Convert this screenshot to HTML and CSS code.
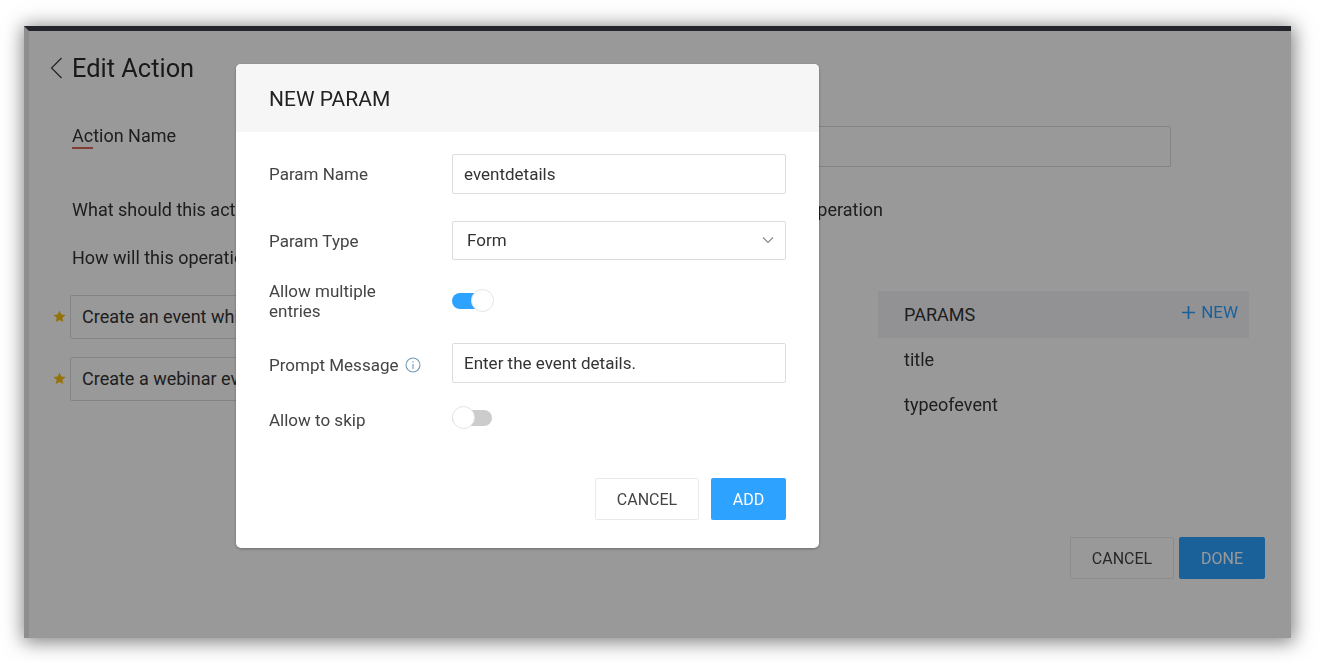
FILE: index.html
```html
<!DOCTYPE html>
<html lang="en">
<head>
<meta charset="utf-8">
<title>Edit Action</title>
<link rel="stylesheet" href="styles.css">
</head>
<body>
<div class="stage">
  <div class="window">
    <header class="page-head">
      <svg class="back" width="13" height="22" viewBox="0 0 13 22"><path d="M11.500 1 1.500 11l10 10" fill="none" stroke="#333" stroke-width="1.100"/></svg>
      <h1 class="page-title">Edit Action</h1>
    </header>
    <div class="name-row">
      <label class="name-label"><span class="spell">Ac</span>tion Name</label>
      <div class="field name-field"></div>
    </div>
    <div class="line line-what"><span>What should this action do</span><span>Describe the operation</span></div>
    <div class="line line-how">How will this operation be triggered</div>
    <div class="lower">
      <div class="phrases">
        <div class="phrase">
          <svg class="star" width="13" height="13" viewBox="0 0 24 24"><path d="M12 1l3.300 7.300 7.900.9-5.900 5.300 1.700 7.800L12 18.300 5 22.300l1.700-7.800L.8 9.200l7.900-.9z" fill="#f5be12"/></svg>
          <div class="field phrase-field">Create an event which is open to all</div>
        </div>
        <div class="phrase">
          <svg class="star" width="13" height="13" viewBox="0 0 24 24"><path d="M12 1l3.300 7.300 7.900.9-5.900 5.300 1.700 7.800L12 18.300 5 22.300l1.700-7.800L.8 9.200l7.900-.9z" fill="#f5be12"/></svg>
          <div class="field phrase-field">Create a webinar event for everyone</div>
        </div>
      </div>
      <aside class="params">
        <div class="params-head">
          <span>PARAMS</span>
          <span class="params-new"><svg width="13" height="13" viewBox="0 0 13 13"><path d="M6.500 0v13M0 6.500h13" stroke="#2ea2ff" stroke-width="1.700" fill="none"/></svg>NEW</span>
        </div>
        <div class="param-item">title</div>
        <div class="param-item">typeofevent</div>
      </aside>
    </div>
    <div class="page-actions">
      <button class="btn btn-plain">CANCEL</button>
      <button class="btn btn-primary btn-done">DONE</button>
    </div>

    <div class="backdrop"></div>
    <section class="modal">
      <h2 class="modal-head">NEW PARAM</h2>
      <div class="modal-body">
        <div class="row row-name">
          <label class="row-label">Param Name</label>
          <div class="field modal-field">eventdetails</div>
        </div>
        <div class="row row-type">
          <label class="row-label">Param Type</label>
          <div class="field modal-field select">
            <span>Form</span>
            <svg width="12" height="8" viewBox="0 0 12 8"><path d="M1 1.500 6 6.500l5-5" fill="none" stroke="#8a8a8a" stroke-width="1.200"/></svg>
          </div>
        </div>
        <div class="row row-multi">
          <label class="row-label two-line">Allow multiple entries</label>
          <div class="toggle on"><span class="track"></span><span class="knob"></span></div>
        </div>
        <div class="row row-prompt">
          <label class="row-label label-low">Prompt Message
            <svg class="info" width="16" height="16" viewBox="0 0 16 16"><circle cx="8" cy="8" r="7" fill="none" stroke="#6f97b5" stroke-width="1.100"/><path d="M8 7v5M8 4.200v1.400" stroke="#6f97b5" stroke-width="1.100" fill="none"/></svg>
          </label>
          <div class="field modal-field">Enter the event details.</div>
        </div>
        <div class="row row-skip">
          <label class="row-label label-low">Allow to skip</label>
          <div class="toggle"><span class="track"></span><span class="knob"></span></div>
        </div>
        <div class="modal-actions">
          <button class="btn btn-plain">CANCEL</button>
          <button class="btn btn-primary btn-add">ADD</button>
        </div>
      </div>
    </section>
  </div>
</div>
</body>
</html>
```
FILE: styles.css
```css
* { box-sizing: border-box; }
html, body { margin: 0; height: 100%; background: #fff; overflow: hidden; }
body { font-family: Roboto, "Liberation Sans", sans-serif; color: #333; font-size: 17px; }
.stage { padding: 26px 29px 24px 24px; height: 662px; filter: blur(0.6px); }
.window {
  position: relative; width: 1267px; height: 612px; background: #fff; font-size: 18px;
  border-top: 5px solid #23242c; border-left: 5px solid #8e8e8e;
  box-shadow: 1px 2px 18px 2px rgba(0,0,0,.5);
  overflow: hidden;
}
.page-head { display: flex; align-items: center; height: 34px; margin-top: 20px; padding-left: 21px; gap: 9px; }
.page-title { margin: 0; font-size: 25.4px; font-weight: 400; line-height: 34px; color: #2a2a2a; }
.name-row { display: flex; align-items: flex-start; height: 40px; margin-top: 41px; padding-left: 43px; }
.name-label { width: 164px; line-height: 20px; }
.spell { border-bottom: 2px solid #d9635c; padding-bottom: 1px; }
.field { border: 1px solid #dcdcdc; border-radius: 2px; background: #fff; display: flex; align-items: center; }
.name-field { width: 935px; height: 41px; }
.line { padding-left: 43px; line-height: 22px; }
.line-what { display: flex; justify-content: space-between; width: 854px; margin-top: 33px; }
.line-how { margin-top: 26px; }
.lower { display: flex; justify-content: space-between; margin-top: 22px; padding-left: 24px; padding-right: 42px; }
.phrases { display: flex; flex-direction: column; gap: 18px; margin-top: 4px; }
.phrase { display: flex; align-items: center; gap: 4px; }
.star { flex: none; margin-top: -2px; }
.phrase-field { width: 400px; height: 44px; padding: 0 0 2px 11px; }
.params { width: 371px; }
.params-head { display: flex; justify-content: space-between; align-items: center; height: 47px; padding: 0 11px 0 26px; background: #f3f3f8; }
.params-new { display: flex; align-items: center; gap: 6px; color: #2ea2ff; margin-top: -5px; font-size: 17px; }
.param-item { padding: 0 0 2px 26px; line-height: 22px; height: 45px; display: flex; align-items: center; }
.page-actions { position: absolute; right: 26px; top: 506px; display: flex; gap: 5px; }
.btn { font: inherit; font-size: 16px; height: 42px; border-radius: 2px; cursor: pointer; }
.btn-plain { width: 104px; background: #fff; border: 1.5px solid #eaeaea; color: #444; }
.btn-primary { background: #2ea2ff; border: 0; color: #fff; }
.btn-done { width: 86px; }
.backdrop { position: absolute; inset: 0; background: rgba(0,0,0,.4); }
.modal {
  position: absolute; left: 207px; top: 33px; width: 583px; height: 484px;
  background: #fff; border-radius: 5px; overflow: hidden; font-size: 17px;
  box-shadow: 0 1px 3px rgba(0,0,0,.3);
}
.modal-head { margin: 0; height: 68px; background: #f6f6f6; padding-left: 33px; font-size: 21px; font-weight: 400; line-height: 71px; color: #222; }
.modal-body { padding: 22px 33px 0 33px; }
.row { display: flex; align-items: center; }
.row-label { width: 183px; flex: none; color: #444; display: flex; align-items: center; gap: 7px; }
.label-low { padding-top: 4px; }
.two-line { width: 150px; margin-right: 33px; line-height: 20px; }
.modal-field { width: 335px; height: 40px; padding-left: 11px; color: #333; }
.row-type { margin-top: 27px; }
.row-multi { margin-top: 21px; height: 40px; }
.row-prompt { margin-top: 22px; }
.row-skip { margin-top: 15px; height: 40px; }
.select { justify-content: space-between; height: 39px; padding: 0 11px 1px 14px; }
.toggle { position: relative; width: 42px; height: 24px; }
.on { margin-top: -1px; }
.track { position: absolute; left: 0; top: 4px; width: 40px; height: 16px; border-radius: 8px; background: #ccc; }
.on .track { background: #2ea2ff; }
.knob { position: absolute; top: 0; left: 0; width: 23px; height: 23px; border-radius: 50%; background: #fff; border: 1px solid #e4e4e4; }
.on .knob { left: 19px; }
.modal-actions { display: flex; justify-content: flex-end; gap: 12px; margin-top: 40px; }
.btn-add { width: 75px; }
```
